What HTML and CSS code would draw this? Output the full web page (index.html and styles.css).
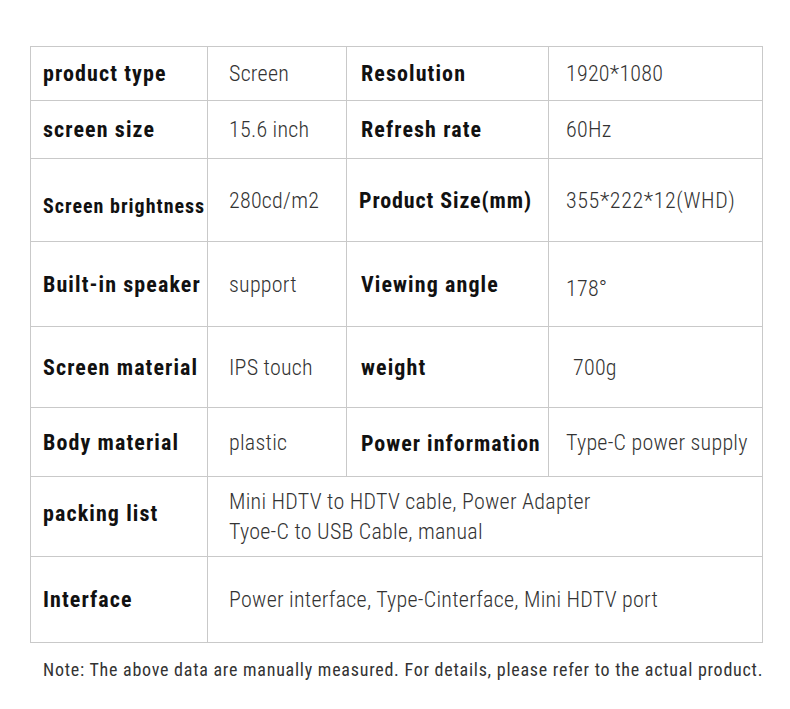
FILE: index.html
```html
<!DOCTYPE html>
<html>
<head>
<meta charset="utf-8">
<link rel="stylesheet" href="styles.css">
</head>
<body>
<div class="page">
  <table class="spec">
    <colgroup>
      <col class="c1"><col class="c2"><col class="c3"><col class="c4">
    </colgroup>
    <tr class="r1">
      <th>product type</th><td>Screen</td>
      <th>Resolution</th><td>1920*1080</td>
    </tr>
    <tr class="r2">
      <th>screen size</th><td>15.6 inch</td>
      <th>Refresh rate</th><td>60Hz</td>
    </tr>
    <tr class="r3">
      <th class="small">Screen brightness</th><td>280cd/m2</td>
      <th class="tight">Product Size(mm)</th><td class="wide">355*222*12(WHD)</td>
    </tr>
    <tr class="r4">
      <th>Built-in speaker</th><td>support</td>
      <th>Viewing angle</th><td class="low">178°</td>
    </tr>
    <tr class="r5">
      <th>Screen material</th><td>IPS touch</td>
      <th>weight</th><td class="indent">700g</td>
    </tr>
    <tr class="r6">
      <th>Body material</th><td>plastic</td>
      <th class="pw">Power information</th><td>Type-C power supply</td>
    </tr>
    <tr class="r7">
      <th class="up">packing list</th>
      <td colspan="3" class="multi">Mini HDTV to HDTV cable, Power Adapter<br>Tyoe-C to USB Cable, manual</td>
    </tr>
    <tr class="r8">
      <th>Interface</th>
      <td colspan="3">Power interface, Type-Cinterface, Mini HDTV port</td>
    </tr>
  </table>
  <p class="note">Note: The above data are manually measured. For details, please refer to the actual product.</p>
</div>
</body>
</html>
```

FILE: styles.css
```css
html, body {
  margin: 0;
  padding: 0;
  background: #ffffff;
}

.page {
  width: 790px;
  height: 709px;
  padding: 46px 0 0 30px;
  box-sizing: border-box;
  font-family: "Roboto Condensed", "Liberation Sans", sans-serif;
}

.spec {
  border-collapse: collapse;
  table-layout: fixed;
  width: 732px;
  border: 1px solid #c9c9c9;
}

.c1 { width: 177px; }
.c2 { width: 139px; }
.c3 { width: 202px; }
.c4 { width: 214px; }

.spec th,
.spec td {
  border: 1px solid #c9c9c9;
  vertical-align: middle;
  text-align: left;
  white-space: nowrap;
  padding: 0;
}

.spec th {
  font-weight: bold;
  font-size: 22px;
  letter-spacing: 1.1px;
  color: #111111;
  padding-left: 12px;
}

.spec td {
  font-weight: 300;
  font-size: 22px;
  letter-spacing: 0.25px;
  color: #333333;
  padding-left: 21px;
}

.spec td + th {
  padding-left: 14px;
}

.spec th + td + th + td {
  padding-left: 17px;
}

.r1 { height: 54px; }
.r2 { height: 58px; }
.r3 { height: 83px; }
.r4 { height: 85px; }
.r5 { height: 81px; }
.r6 { height: 69px; }
.r7 { height: 80px; }
.r8 { height: 86px; }

.spec th.small { font-size: 20px; letter-spacing: 1px; padding-top: 12px; }
.spec th.tight { padding-left: 12px; letter-spacing: 0.9px; }
.spec th.pw { padding-left: 14px; letter-spacing: 1px; padding-top: 3px; }
.spec th.up { padding-bottom: 6px; }
.spec td.indent { padding-left: 24px; }
.spec td.low { padding-top: 8px; }
.spec td.wide { letter-spacing: 0.6px; }

.multi { line-height: 30px; padding-bottom: 4px; }

.note {
  margin: 16px 0 0 13px;
  font-size: 18px;
  font-weight: 400;
  letter-spacing: 0.75px;
  color: #333333;
  white-space: nowrap;
}
```
